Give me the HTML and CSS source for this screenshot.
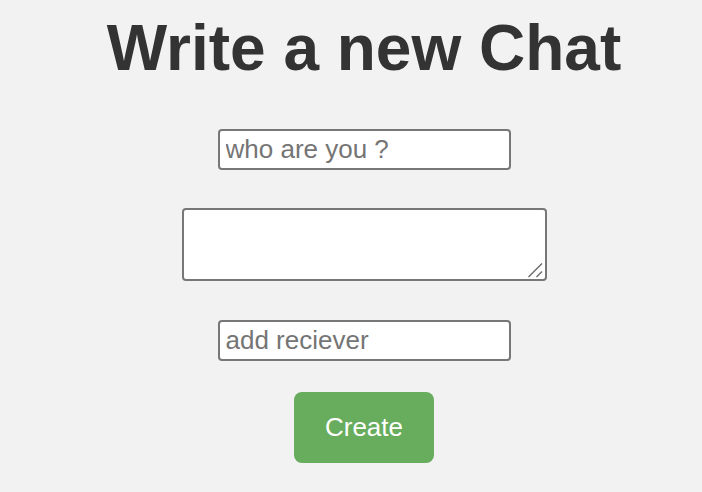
FILE: index.html
```html
<!DOCTYPE html>
<html lang="en">
<head>
<meta charset="utf-8">
<title>Write a new Chat</title>
<link rel="stylesheet" href="styles.css">
</head>
<body>
<main class="page">
  <h1 class="title">Write a new Chat</h1>
  <form class="chat-form">
    <input class="field field-name" type="text" placeholder="who are you ?">
    <div class="message-wrap">
      <textarea class="field field-message"></textarea>
      <svg class="grip" width="18" height="18" viewBox="0 0 18 18" aria-hidden="true">
        <line x1="2.5" y1="16" x2="16" y2="2.5" stroke="#6b6b6b" stroke-width="1.4"/>
        <line x1="10.5" y1="16" x2="16" y2="10.5" stroke="#6b6b6b" stroke-width="1.4"/>
      </svg>
    </div>
    <input class="field field-receiver" type="text" placeholder="add reciever">
    <button class="create-btn" type="button">Create</button>
  </form>
</main>
</body>
</html>
```

FILE: styles.css
```css
html, body {
  margin: 0;
  padding: 0;
  background: #f2f2f2;
}

body {
  font-family: "Liberation Sans", Arial, sans-serif;
}

.page {
  display: flex;
  flex-direction: column;
  align-items: center;
  padding-left: 26px;
}

.title {
  margin: 11px 0 0;
  font-size: 64px;
  line-height: 74px;
  font-weight: bold;
  color: #333333;
}

.chat-form {
  display: flex;
  flex-direction: column;
  align-items: center;
  margin-top: 44px;
}

.field {
  box-sizing: border-box;
  font-family: "Liberation Sans", Arial, sans-serif;
  font-size: 26px;
  color: #333;
  background: #ffffff;
  border: 2px solid #777777;
  border-radius: 4px;
  outline: none;
  margin: 0;
}

.field::placeholder {
  color: #757575;
}

.field-name,
.field-receiver {
  width: 293px;
  height: 41px;
  padding: 1px 6px;
}

.message-wrap {
  position: relative;
  margin-top: 38px;
  line-height: 0;
}

.field-message {
  display: block;
  width: 365px;
  height: 73px;
  padding: 4px 6px;
  resize: none;
}

.grip {
  position: absolute;
  right: 3px;
  bottom: 2px;
}

.field-receiver {
  margin-top: 39px;
}

.create-btn {
  margin-top: 31px;
  width: 140px;
  height: 71px;
  border: none;
  border-radius: 8px;
  background: #67ad5d;
  color: #ffffff;
  font-family: "Liberation Sans", Arial, sans-serif;
  font-size: 26px;
  cursor: pointer;
  padding: 0;
}
```
